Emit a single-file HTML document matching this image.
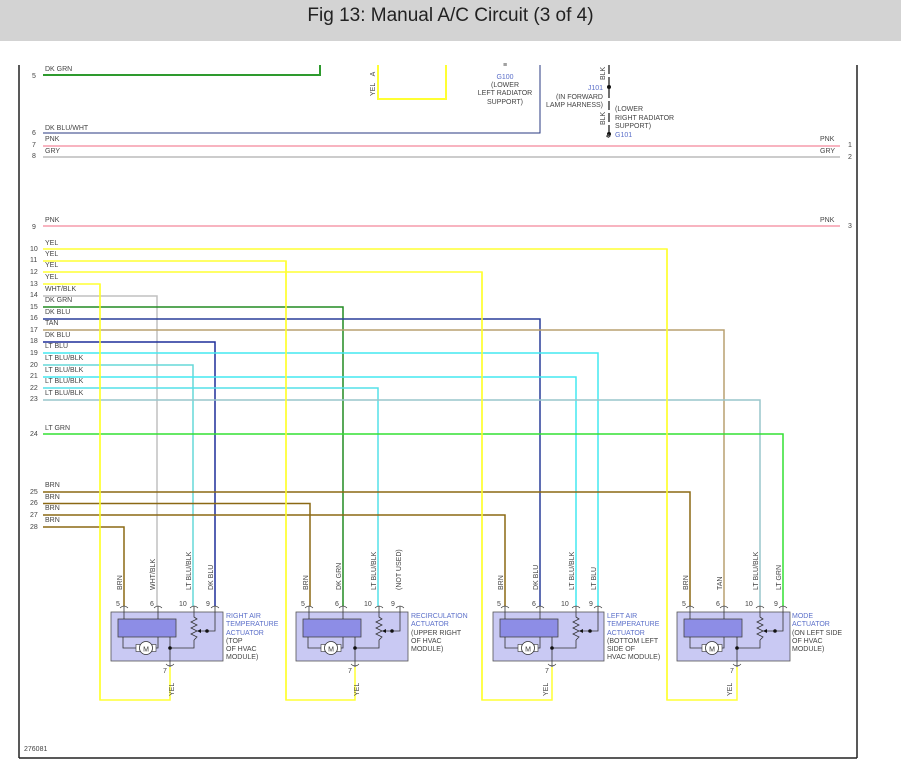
<!DOCTYPE html>
<html><head><meta charset="utf-8"><style>
html,body{margin:0;padding:0;background:#fff;width:901px;height:782px;overflow:hidden}
.hd{position:absolute;left:0;top:0;width:901px;height:41px;background:#d3d3d3;text-align:center;font:19px/31px "Liberation Sans Narrow","Liberation Sans",sans-serif;color:#222}
svg{position:absolute;left:0;top:0}
text{font-family:"Liberation Sans",sans-serif;font-size:7px;fill:#444}
.b{fill:#5b6fc9}
</style></head><body>
<div class="hd">Fig 13: Manual A/C Circuit (3 of 4)</div>
<svg width="901" height="782" viewBox="0 0 901 782">
<!-- frame -->
<line x1="19" y1="65" x2="19" y2="758" stroke="#222" stroke-width="1.5"/>
<line x1="857" y1="65" x2="857" y2="758" stroke="#222" stroke-width="1.5"/>
<line x1="19" y1="758" x2="857" y2="758" stroke="#222" stroke-width="1.5"/>
<text x="24" y="751" font-size="6">276081</text>

<!-- top -->
<polyline points="43,75 320,75 320,65" fill="none" stroke="#2e9a2e" stroke-width="2"/>
<polyline points="378,65 378,99 446,99 446,65" fill="none" stroke="#ffff33" stroke-width="2"/>
<text transform="translate(375,74) rotate(-90)" text-anchor="middle">A</text>
<text transform="translate(375,96) rotate(-90)">YEL</text>
<polyline points="43,133 540,133 540,65" fill="none" stroke="#2a3a80" stroke-width="1"/>
<text x="505" y="67" text-anchor="middle">≡</text>
<text x="505" y="79" text-anchor="middle" class="b">G100</text>
<text x="505" y="87" text-anchor="middle">(LOWER</text>
<text x="505" y="95" text-anchor="middle">LEFT RADIATOR</text>
<text x="505" y="104" text-anchor="middle">SUPPORT)</text>
<line x1="609" y1="65" x2="609" y2="135" stroke="#222" stroke-width="1.3" stroke-dasharray="9,3"/>
<circle cx="609" cy="87" r="2" fill="#111"/>
<circle cx="609" cy="134" r="2" fill="#111"/>
<text transform="translate(605,80) rotate(-90)">BLK</text>
<text transform="translate(605,125) rotate(-90)">BLK</text>
<text x="603" y="90" text-anchor="end" class="b">J101</text>
<text x="603" y="99" text-anchor="end">(IN FORWARD</text>
<text x="603" y="107" text-anchor="end">LAMP HARNESS)</text>
<text x="615" y="111">(LOWER</text>
<text x="615" y="120">RIGHT RADIATOR</text>
<text x="615" y="128">SUPPORT)</text>
<text x="615" y="137" class="b">G101</text>
<text x="606" y="138" fill="#888">♣</text>

<!-- horizontal wires -->
<line x1="43" y1="146" x2="840" y2="146" stroke="#f4879a" stroke-width="1.2"/>
<line x1="43" y1="157" x2="840" y2="157" stroke="#bbb" stroke-width="1.5"/>
<line x1="43" y1="226" x2="840" y2="226" stroke="#f4879a" stroke-width="1.2"/>
<polyline points="43,249 667,249 667,700 737,700 737,667" fill="none" stroke="#ffff33" stroke-width="1.5"/>
<polyline points="43,261 286,261 286,700 355,700 355,667" fill="none" stroke="#ffff33" stroke-width="1.5"/>
<polyline points="43,272 482,272 482,700 552,700 552,667" fill="none" stroke="#ffff33" stroke-width="1.5"/>
<polyline points="43,284 100,284 100,700 170,700 170,667" fill="none" stroke="#ffff33" stroke-width="1.5"/>
<polyline points="43,296 157,296 157,606" fill="none" stroke="#c0c0c0" stroke-width="1.5"/>
<polyline points="43,307 343,307 343,606" fill="none" stroke="#228b22" stroke-width="1.5"/>
<polyline points="43,319 540,319 540,606" fill="none" stroke="#2a3f9a" stroke-width="1.5"/>
<polyline points="43,330 724,330 724,606" fill="none" stroke="#b8a070" stroke-width="1.5"/>
<polyline points="43,342 215,342 215,606" fill="none" stroke="#1e2f9a" stroke-width="1.5"/>
<polyline points="43,353 598,353 598,606" fill="none" stroke="#44e8f0" stroke-width="1.5"/>
<polyline points="43,365 193,365 193,606" fill="none" stroke="#66d8d8" stroke-width="1.5"/>
<polyline points="43,377 576,377 576,606" fill="none" stroke="#44e8f0" stroke-width="1.5"/>
<polyline points="43,388 378,388 378,606" fill="none" stroke="#55e0e8" stroke-width="1.5"/>
<polyline points="43,400 760,400 760,606" fill="none" stroke="#99c6cc" stroke-width="1.5"/>
<polyline points="43,434 783,434 783,606" fill="none" stroke="#33e033" stroke-width="1.5"/>
<polyline points="43,492 690,492 690,606" fill="none" stroke="#8b6914" stroke-width="1.5"/>
<polyline points="43,503.5 310,503.5 310,606" fill="none" stroke="#8b6914" stroke-width="1.5"/>
<polyline points="43,515 505,515 505,606" fill="none" stroke="#8b6914" stroke-width="1.5"/>
<polyline points="43,527 124,527 124,606" fill="none" stroke="#8b6914" stroke-width="1.5"/>
<!-- redraw yellow verticals on top -->
<line x1="100" y1="284" x2="100" y2="700" stroke="#ffff33" stroke-width="1.5"/>
<line x1="286" y1="261" x2="286" y2="700" stroke="#ffff33" stroke-width="1.5"/>
<line x1="482" y1="272" x2="482" y2="700" stroke="#ffff33" stroke-width="1.5"/>
<line x1="667" y1="249" x2="667" y2="700" stroke="#ffff33" stroke-width="1.5"/>

<!-- labels left -->
<g>
<text x="32" y="78">5</text><text x="45" y="71">DK GRN</text>
<text x="32" y="135">6</text><text x="45" y="130">DK BLU/WHT</text>
<text x="32" y="147">7</text><text x="45" y="141">PNK</text>
<text x="32" y="158">8</text><text x="45" y="153">GRY</text>
<text x="32" y="229">9</text><text x="45" y="222">PNK</text>
<text x="30" y="251">10</text><text x="45" y="245">YEL</text>
<text x="30" y="262">11</text><text x="45" y="256">YEL</text>
<text x="30" y="274">12</text><text x="45" y="267">YEL</text>
<text x="30" y="286">13</text><text x="45" y="279">YEL</text>
<text x="30" y="297">14</text><text x="45" y="291">WHT/BLK</text>
<text x="30" y="309">15</text><text x="45" y="302">DK GRN</text>
<text x="30" y="320">16</text><text x="45" y="314">DK BLU</text>
<text x="30" y="332">17</text><text x="45" y="325">TAN</text>
<text x="30" y="343">18</text><text x="45" y="337">DK BLU</text>
<text x="30" y="355">19</text><text x="45" y="348">LT BLU</text>
<text x="30" y="367">20</text><text x="45" y="360">LT BLU/BLK</text>
<text x="30" y="378">21</text><text x="45" y="372">LT BLU/BLK</text>
<text x="30" y="390">22</text><text x="45" y="383">LT BLU/BLK</text>
<text x="30" y="401">23</text><text x="45" y="395">LT BLU/BLK</text>
<text x="30" y="436">24</text><text x="45" y="430">LT GRN</text>
<text x="30" y="494">25</text><text x="45" y="487">BRN</text>
<text x="30" y="505">26</text><text x="45" y="499">BRN</text>
<text x="30" y="517">27</text><text x="45" y="510">BRN</text>
<text x="30" y="529">28</text><text x="45" y="522">BRN</text>
<text x="820" y="141">PNK</text><text x="848" y="147">1</text>
<text x="820" y="153">GRY</text><text x="848" y="159">2</text>
<text x="820" y="222">PNK</text><text x="848" y="228">3</text>
</g>

<!-- Box 1 -->
<g transform="translate(111,0)">
<rect x="0" y="612" width="112" height="49" fill="#c9c9f3" stroke="#555" stroke-width="0.8"/>
<rect x="7" y="619" width="58" height="18" fill="#8d8de6" stroke="#444" stroke-width="0.8"/>
<polyline points="12,637 12,648 28,648" fill="none" stroke="#333" stroke-width="0.8"/>
<polyline points="47,606 47,619" fill="none" stroke="#333" stroke-width="0.8"/>
<polyline points="13,606 13,619" fill="none" stroke="#333" stroke-width="0.8"/>
<polyline points="47,637 47,648 42,648" fill="none" stroke="#333" stroke-width="0.8"/>
<rect x="25" y="644.5" width="4" height="7" fill="#fff" stroke="#333" stroke-width="0.6"/><rect x="41" y="644.5" width="4" height="7" fill="#fff" stroke="#333" stroke-width="0.6"/>
<circle cx="35" cy="648" r="6.5" fill="#fff" stroke="#333" stroke-width="0.8"/><text x="35" y="651.5" text-anchor="middle" font-size="9" style="fill:#333">M</text>
<polyline points="59,637 59,667" fill="none" stroke="#333" stroke-width="0.8"/>
<polyline points="59,648 83,648 83,640" fill="none" stroke="#333" stroke-width="0.8"/>
<polyline points="83,606 83,617 86,619 80,622 86,625 80,628 86,631 80,634 86,637 83,640" fill="none" stroke="#333" stroke-width="0.8"/>
<polyline points="104,606 104,631 88,631" fill="none" stroke="#333" stroke-width="0.8"/><path d="M86,631 l4,-2 v4z" fill="#111"/>
<circle cx="59" cy="648" r="1.8" fill="#111"/><circle cx="96" cy="631" r="1.8" fill="#111"/>
<path d="M9,608 q4,-4 8,0 M43,608 q4,-4 8,0 M79,608 q4,-4 8,0 M100,608 q4,-4 8,0 M55,664 q4,4 8,0" fill="none" stroke="#333" stroke-width="0.6"/>
<text x="5" y="606">5</text><text x="39" y="606">6</text><text x="68" y="606">10</text><text x="95" y="606">9</text>
<text x="52" y="673">7</text>
<text transform="translate(63,696) rotate(-90)">YEL</text>
</g>
<text transform="translate(122,590) rotate(-90)">BRN</text>
<text transform="translate(155,590) rotate(-90)">WHT/BLK</text>
<text transform="translate(191,590) rotate(-90)">LT BLU/BLK</text>
<text transform="translate(213,590) rotate(-90)">DK BLU</text>
<g class="b"><text x="226" y="618" class="b">RIGHT AIR</text><text x="226" y="626" class="b">TEMPERATURE</text><text x="226" y="635" class="b">ACTUATOR</text><text x="226" y="643">(TOP</text><text x="226" y="651">OF HVAC</text><text x="226" y="659">MODULE)</text></g>

<!-- Box 2 -->
<g transform="translate(296,0)">
<rect x="0" y="612" width="112" height="49" fill="#c9c9f3" stroke="#555" stroke-width="0.8"/>
<rect x="7" y="619" width="58" height="18" fill="#8d8de6" stroke="#444" stroke-width="0.8"/>
<polyline points="12,637 12,648 28,648" fill="none" stroke="#333" stroke-width="0.8"/>
<polyline points="47,606 47,619" fill="none" stroke="#333" stroke-width="0.8"/>
<polyline points="13,606 13,619" fill="none" stroke="#333" stroke-width="0.8"/>
<polyline points="47,637 47,648 42,648" fill="none" stroke="#333" stroke-width="0.8"/>
<rect x="25" y="644.5" width="4" height="7" fill="#fff" stroke="#333" stroke-width="0.6"/><rect x="41" y="644.5" width="4" height="7" fill="#fff" stroke="#333" stroke-width="0.6"/>
<circle cx="35" cy="648" r="6.5" fill="#fff" stroke="#333" stroke-width="0.8"/><text x="35" y="651.5" text-anchor="middle" font-size="9" style="fill:#333">M</text>
<polyline points="59,637 59,667" fill="none" stroke="#333" stroke-width="0.8"/>
<polyline points="59,648 83,648 83,640" fill="none" stroke="#333" stroke-width="0.8"/>
<polyline points="83,606 83,617 86,619 80,622 86,625 80,628 86,631 80,634 86,637 83,640" fill="none" stroke="#333" stroke-width="0.8"/>
<polyline points="104,606 104,631 88,631" fill="none" stroke="#333" stroke-width="0.8"/><path d="M86,631 l4,-2 v4z" fill="#111"/>
<circle cx="59" cy="648" r="1.8" fill="#111"/><circle cx="96" cy="631" r="1.8" fill="#111"/>
<path d="M9,608 q4,-4 8,0 M43,608 q4,-4 8,0 M79,608 q4,-4 8,0 M100,608 q4,-4 8,0 M55,664 q4,4 8,0" fill="none" stroke="#333" stroke-width="0.6"/>
<text x="5" y="606">5</text><text x="39" y="606">6</text><text x="68" y="606">10</text><text x="95" y="606">9</text>
<text x="52" y="673">7</text>
<text transform="translate(63,696) rotate(-90)">YEL</text>
</g>
<text transform="translate(308,590) rotate(-90)">BRN</text>
<text transform="translate(341,590) rotate(-90)">DK GRN</text>
<text transform="translate(376,590) rotate(-90)">LT BLU/BLK</text>
<text transform="translate(401,590) rotate(-90)">(NOT USED)</text>
<g><text x="411" y="618" class="b">RECIRCULATION</text><text x="411" y="626" class="b">ACTUATOR</text><text x="411" y="635">(UPPER RIGHT</text><text x="411" y="643">OF HVAC</text><text x="411" y="651">MODULE)</text></g>

<!-- Box 3 -->
<g transform="translate(493,0)">
<rect x="0" y="612" width="111" height="49" fill="#c9c9f3" stroke="#555" stroke-width="0.8"/>
<rect x="7" y="619" width="58" height="18" fill="#8d8de6" stroke="#444" stroke-width="0.8"/>
<polyline points="12,637 12,648 28,648" fill="none" stroke="#333" stroke-width="0.8"/>
<polyline points="47,606 47,619" fill="none" stroke="#333" stroke-width="0.8"/>
<polyline points="12,606 12,619" fill="none" stroke="#333" stroke-width="0.8"/>
<polyline points="47,637 47,648 42,648" fill="none" stroke="#333" stroke-width="0.8"/>
<rect x="25" y="644.5" width="4" height="7" fill="#fff" stroke="#333" stroke-width="0.6"/><rect x="41" y="644.5" width="4" height="7" fill="#fff" stroke="#333" stroke-width="0.6"/>
<circle cx="35" cy="648" r="6.5" fill="#fff" stroke="#333" stroke-width="0.8"/><text x="35" y="651.5" text-anchor="middle" font-size="9" style="fill:#333">M</text>
<polyline points="59,637 59,667" fill="none" stroke="#333" stroke-width="0.8"/>
<polyline points="59,648 83,648 83,640" fill="none" stroke="#333" stroke-width="0.8"/>
<polyline points="83,606 83,617 86,619 80,622 86,625 80,628 86,631 80,634 86,637 83,640" fill="none" stroke="#333" stroke-width="0.8"/>
<polyline points="105,606 105,631 88,631" fill="none" stroke="#333" stroke-width="0.8"/><path d="M86,631 l4,-2 v4z" fill="#111"/>
<circle cx="59" cy="648" r="1.8" fill="#111"/><circle cx="97" cy="631" r="1.8" fill="#111"/>
<path d="M8,608 q4,-4 8,0 M43,608 q4,-4 8,0 M79,608 q4,-4 8,0 M101,608 q4,-4 8,0 M55,664 q4,4 8,0" fill="none" stroke="#333" stroke-width="0.6"/>
<text x="4" y="606">5</text><text x="39" y="606">6</text><text x="68" y="606">10</text><text x="96" y="606">9</text>
<text x="52" y="673">7</text>
<text transform="translate(55,696) rotate(-90)">YEL</text>
</g>
<text transform="translate(503,590) rotate(-90)">BRN</text>
<text transform="translate(538,590) rotate(-90)">DK BLU</text>
<text transform="translate(574,590) rotate(-90)">LT BLU/BLK</text>
<text transform="translate(596,590) rotate(-90)">LT BLU</text>
<g><text x="607" y="618" class="b">LEFT AIR</text><text x="607" y="626" class="b">TEMPERATURE</text><text x="607" y="635" class="b">ACTUATOR</text><text x="607" y="643">(BOTTOM LEFT</text><text x="607" y="651">SIDE OF</text><text x="607" y="659">HVAC MODULE)</text></g>

<!-- Box 4 -->
<g transform="translate(677,0)">
<rect x="0" y="612" width="113" height="49" fill="#c9c9f3" stroke="#555" stroke-width="0.8"/>
<rect x="7" y="619" width="58" height="18" fill="#8d8de6" stroke="#444" stroke-width="0.8"/>
<polyline points="13,637 13,648 28,648" fill="none" stroke="#333" stroke-width="0.8"/>
<polyline points="47,606 47,619" fill="none" stroke="#333" stroke-width="0.8"/>
<polyline points="13,606 13,619" fill="none" stroke="#333" stroke-width="0.8"/>
<polyline points="47,637 47,648 42,648" fill="none" stroke="#333" stroke-width="0.8"/>
<rect x="25" y="644.5" width="4" height="7" fill="#fff" stroke="#333" stroke-width="0.6"/><rect x="41" y="644.5" width="4" height="7" fill="#fff" stroke="#333" stroke-width="0.6"/>
<circle cx="35" cy="648" r="6.5" fill="#fff" stroke="#333" stroke-width="0.8"/><text x="35" y="651.5" text-anchor="middle" font-size="9" style="fill:#333">M</text>
<polyline points="60,637 60,667" fill="none" stroke="#333" stroke-width="0.8"/>
<polyline points="60,648 83,648 83,640" fill="none" stroke="#333" stroke-width="0.8"/>
<polyline points="83,606 83,617 86,619 80,622 86,625 80,628 86,631 80,634 86,637 83,640" fill="none" stroke="#333" stroke-width="0.8"/>
<polyline points="106,606 106,631 88,631" fill="none" stroke="#333" stroke-width="0.8"/><path d="M86,631 l4,-2 v4z" fill="#111"/>
<circle cx="60" cy="648" r="1.8" fill="#111"/><circle cx="98" cy="631" r="1.8" fill="#111"/>
<path d="M9,608 q4,-4 8,0 M43,608 q4,-4 8,0 M79,608 q4,-4 8,0 M102,608 q4,-4 8,0 M56,664 q4,4 8,0" fill="none" stroke="#333" stroke-width="0.6"/>
<text x="5" y="606">5</text><text x="39" y="606">6</text><text x="68" y="606">10</text><text x="97" y="606">9</text>
<text x="53" y="673">7</text>
<text transform="translate(55,696) rotate(-90)">YEL</text>
</g>
<text transform="translate(688,590) rotate(-90)">BRN</text>
<text transform="translate(722,590) rotate(-90)">TAN</text>
<text transform="translate(758,590) rotate(-90)">LT BLU/BLK</text>
<text transform="translate(781,590) rotate(-90)">LT GRN</text>
<g><text x="792" y="618" class="b">MODE</text><text x="792" y="626" class="b">ACTUATOR</text><text x="792" y="635">(ON LEFT SIDE</text><text x="792" y="643">OF HVAC</text><text x="792" y="651">MODULE)</text></g>
</svg>
</body></html>
